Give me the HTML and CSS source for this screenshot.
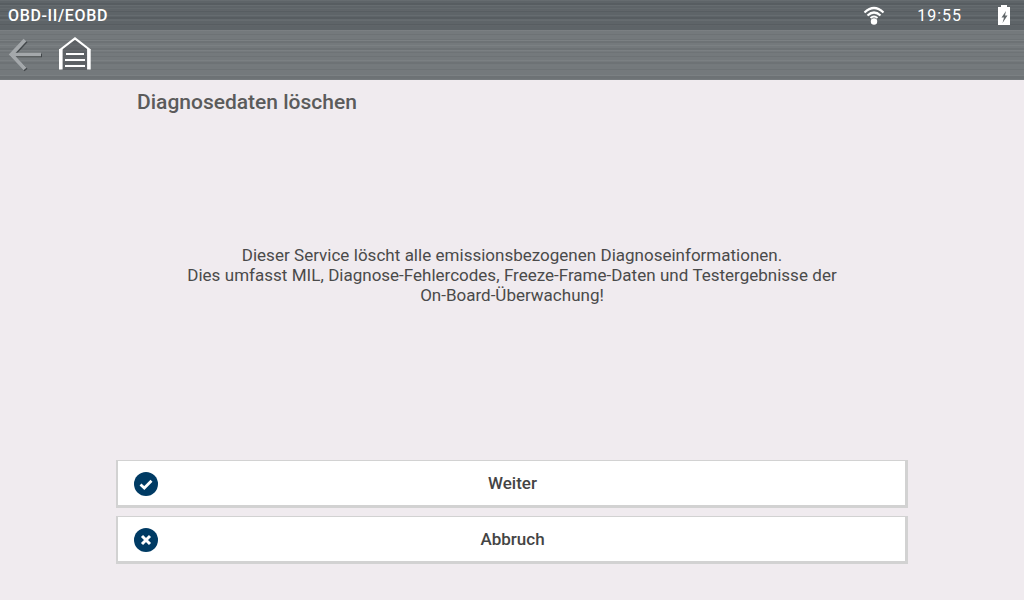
FILE: index.html
```html
<!DOCTYPE html>
<html lang="de">
<head>
  <meta charset="UTF-8">
  <title>Diagnosedaten löschen</title>
  <link rel="stylesheet" href="styles.css">
</head>
<body>

  <div class="status-bar">
    <span class="status-title">OBD-II/EOBD</span>
    <div class="status-right">
      <svg class="wifi-icon" width="22" height="20" viewBox="0 0 22 20">
        <path d="M1.5 7.5 Q11 -1.5 20.5 7.5" fill="none" stroke="#fff" stroke-width="2.2"/>
        <path d="M4.5 10.5 Q11 4.5 17.5 10.5" fill="none" stroke="#fff" stroke-width="2.2"/>
        <path d="M7.5 13 Q11 10 14.5 13" fill="none" stroke="#fff" stroke-width="2"/>
        <circle cx="11" cy="16.5" r="3.2" fill="#fff"/>
      </svg>
      <span class="clock">19:55</span>
      <svg class="battery-icon" width="12" height="20" viewBox="0 0 12 20">
        <path d="M3 0H9V2H12V20H0V2H3Z" fill="#fff"/>
        <path d="M8 6L3.5 12.5H6L4.5 18L9.5 10.5H7Z" fill="#62686b"/>
      </svg>
    </div>
  </div>

  <div class="tool-bar">
    <svg class="back-icon" width="36" height="36" viewBox="0 0 36 36">
      <path d="M17 3L3.5 17.5L17 32" fill="none" stroke="#a4a8ab" stroke-width="4"/>
      <path d="M5 17.5H33" fill="none" stroke="#a4a8ab" stroke-width="3.5"/>
    </svg>
    <svg class="home-icon" width="34" height="34" viewBox="0 0 34 34">
      <path d="M17 3L31 13V34H3V13Z" fill="#31363a" fill-opacity="0.3"/>
      <path d="M2 14L17 2.5L32 14" fill="none" stroke="#fff" stroke-width="2.2"/>
      <path d="M2.8 13V33.5M30.9 13V33.5" fill="none" stroke="#fff" stroke-width="3.6"/>
      <path d="M8 18H26M7 24H27M7 30H27" fill="none" stroke="#fff" stroke-width="2"/>
    </svg>
  </div>

  <main class="content">
    <h1 class="page-title">Diagnosedaten löschen</h1>

    <p class="message">
      Dieser Service löscht alle emissionsbezogenen Diagnoseinformationen.<br>
      Dies umfasst MIL, Diagnose-Fehlercodes, Freeze-Frame-Daten und Testergebnisse der<br>
      On-Board-Überwachung!
    </p>

    <div class="button-list">
      <button class="action-button">
        <svg class="button-icon" width="24" height="24" viewBox="0 0 24 24">
          <circle cx="12" cy="12" r="12" fill="#003b64"/>
          <path d="M6.5 12.5L10.3 16L17.5 8.8" fill="none" stroke="#fff" stroke-width="2.8"/>
        </svg>
        <span>Weiter</span>
      </button>
      <button class="action-button">
        <svg class="button-icon" width="24" height="24" viewBox="0 0 24 24">
          <circle cx="12" cy="12" r="12" fill="#003b64"/>
          <path d="M8 8L16 16M16 8L8 16" fill="none" stroke="#fff" stroke-width="3"/>
        </svg>
        <span>Abbruch</span>
      </button>
    </div>
  </main>

</body>
</html>
```

FILE: styles.css
```css
/* General Styles */
html, body {
  height: 100%;
}

body {
  margin: 0;
  display: flex;
  flex-direction: column;
  overflow: hidden;
  font-family: Roboto, sans-serif;
  background-color: #f0ebef;
  color: #4a4a4a;
}

/* Header bars - brushed metal look from overlapping stripes */
.status-bar {
  height: 30px;
  display: flex;
  align-items: center;
  justify-content: space-between;
  padding: 0 14px 0 8px;
  color: #fff;
  background-color: #5e6468;
  background-image:
    repeating-linear-gradient(180deg, rgba(255,255,255,0.05) 0 1px, transparent 1px 5px),
    repeating-linear-gradient(180deg, transparent 0 3px, rgba(0,0,0,0.07) 3px 5px, transparent 5px 7px),
    repeating-linear-gradient(180deg, transparent 0 8px, rgba(255,255,255,0.04) 8px 9px, transparent 9px 11px);
}

.status-title {
  font-size: 16px;
  font-weight: 500;
  letter-spacing: 0.65px;
}

.status-right {
  display: flex;
  align-items: center;
}

.wifi-icon {
  margin-right: 32px;
}

.clock {
  font-size: 16px;
  font-weight: 400;
  letter-spacing: 1px;
  margin-right: 36px;
}

.tool-bar {
  height: 50px;
  display: flex;
  align-items: center;
  padding-left: 8px;
  background-color: #74797c;
  background-image:
    repeating-linear-gradient(180deg, rgba(255,255,255,0.05) 0 1px, transparent 1px 5px),
    repeating-linear-gradient(180deg, transparent 0 4px, rgba(0,0,0,0.06) 4px 6px, transparent 6px 7px),
    repeating-linear-gradient(180deg, transparent 0 9px, rgba(0,0,0,0.05) 9px 10px, transparent 10px 13px);
}

.back-icon {
  margin-right: 14px;
  filter: drop-shadow(1px 1px 0 rgba(45, 50, 53, 0.7));
}

.home-icon {
  margin-top: -4px;
}

/* Page content */
.content {
  flex: 1;
  display: flex;
  flex-direction: column;
  align-items: center;
}

.page-title {
  align-self: flex-start;
  margin: 10px 0 0 137px;
  font-size: 21px;
  line-height: 24px;
  font-weight: 500;
  color: #5b5b5b;
}

.message {
  margin: 131px 0 0;
  font-size: 17px;
  line-height: 20px;
  word-spacing: 0.2px;
  text-align: center;
  color: #4a4a4a;
}

.button-list {
  margin-top: 155px;
  display: flex;
  flex-direction: column;
  gap: 8px;
}

.action-button {
  position: relative;
  width: 792px;
  height: 48px;
  display: flex;
  align-items: center;
  justify-content: center;
  padding: 0;
  box-sizing: border-box;
  background-color: #fff;
  border-style: solid;
  border-color: #d2d2d2;
  border-width: 1px 3px 3px 2px;
  font-family: Roboto, sans-serif;
  font-size: 17px;
  font-weight: 500;
  color: #444;
}

.action-button span {
  padding-left: 2px;
}

.button-icon {
  position: absolute;
  left: 16px;
  top: 11px;
}
```
